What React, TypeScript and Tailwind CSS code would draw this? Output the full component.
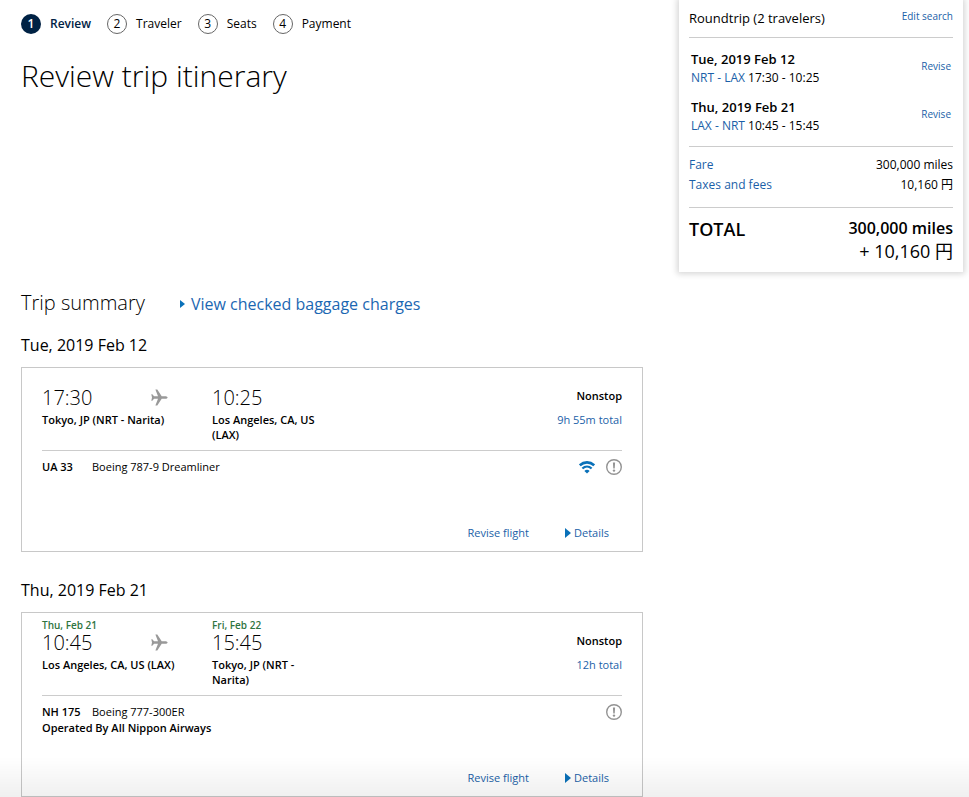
type Stop = { date?: string; time: string; place: string };

type Flight = {
  day: string;
  depart: Stop;
  arrive: Stop;
  duration: string;
  number: string;
  aircraft: string;
  operator?: string;
  wifi?: boolean;
};

const flights: Flight[] = [
  {
    day: 'Tue, 2019 Feb 12',
    depart: { time: '17:30', place: 'Tokyo, JP (NRT - Narita)' },
    arrive: { time: '10:25', place: 'Los Angeles, CA, US (LAX)' },
    duration: '9h 55m total',
    number: 'UA 33',
    aircraft: 'Boeing 787-9 Dreamliner',
    wifi: true,
  },
  {
    day: 'Thu, 2019 Feb 21',
    depart: { date: 'Thu, Feb 21', time: '10:45', place: 'Los Angeles, CA, US (LAX)' },
    arrive: { date: 'Fri, Feb 22', time: '15:45', place: 'Tokyo, JP (NRT - Narita)' },
    duration: '12h total',
    number: 'NH 175',
    aircraft: 'Boeing 777-300ER',
    operator: 'Operated By All Nippon Airways',
  },
];

const steps = ['Review', 'Traveler', 'Seats', 'Payment'];

const legs = [
  { day: 'Tue, 2019 Feb 12', route: 'NRT - LAX', times: '17:30 - 10:25' },
  { day: 'Thu, 2019 Feb 21', route: 'LAX - NRT', times: '10:45 - 15:45' },
];

function PlaneIcon() {
  return (
    <svg width="17" height="17" viewBox="0 0 17 17" fill="#999" aria-hidden="true">
      <path d="M4.4 0.4h1.900l4.400 6.800h3.400c1.400 0 2.500.6 2.500 1.300s-1.100 1.300-2.500 1.300h-3.400l-4.400 6.800H4.400l2.600-6.800H3.100L1.300 11.700H.3L1 8.500.3 5.300h1l1.800 1.900H7z" />
    </svg>
  );
}

function WifiIcon() {
  return (
    <svg width="16" height="13" viewBox="0 0 16 13" fill="none" role="img" aria-label="Wi-Fi">
      <path d="M.8 4.300C5 .4 11 .4 15.200 4.300" stroke="#0a71b9" strokeWidth="2.600" />
      <path d="M3.400 7.500c2.700-2.500 6.500-2.500 9.200 0" stroke="#0a71b9" strokeWidth="2.300" />
      <path d="M5.400 9.900c1.500-1.600 3.700-1.600 5.200 0L8 12.400z" fill="#0a71b9" />
    </svg>
  );
}

function AlertIcon() {
  return (
    <svg width="16" height="16" viewBox="0 0 16 16" fill="none" role="img" aria-label="Notice">
      <circle cx="8" cy="8" r="7.300" stroke="#939393" strokeWidth="1.400" />
      <path d="M6.900 3.500h2.200l-.4 6h-1.400z" fill="#939393" />
      <circle cx="8" cy="11.600" r="1.200" fill="#939393" />
    </svg>
  );
}

function Caret({ small = false }: { small?: boolean }) {
  return (
    <svg className={small ? 'h-2 w-[5px]' : 'h-2.5 w-[6px]'} viewBox="0 0 6 10" preserveAspectRatio="none" fill="#0a71b9" aria-hidden="true">
      <path d="M0 0l6 5-6 5z" />
    </svg>
  );
}

function StopInfo({ stop }: { stop: Stop }) {
  return (
    <div>
      <p className="h-[11px] text-[10px] leading-[11px] font-semibold text-[#2e7440]">{stop.date}</p>
      <p className="text-xl leading-6 font-light">{stop.time}</p>
      <p className="mt-0.5 text-[11px] leading-[15px] font-semibold">{stop.place}</p>
    </div>
  );
}

function FlightCard({ flight }: { flight: Flight }) {
  return (
    <section className="mb-[26px]">
      <h3 className="text-base leading-6">{flight.day}</h3>
      <div className="mt-2.5 border border-[#c8c8c8] px-5 pt-[7px] pb-2">
        <div className="grid grid-cols-[170px_minmax(0,108px)_1fr] border-b border-[#ccc] pb-2">
          <div className="relative">
            <StopInfo stop={flight.depart} />
            <div className="absolute top-3.5 left-[109px]">
              <PlaneIcon />
            </div>
          </div>
          <StopInfo stop={flight.arrive} />
          <div className="pt-[9px] text-right text-[11px] leading-6">
            <p className="font-semibold">Nonstop</p>
            <a href="#duration" className="text-[#1b5fa8]">{flight.duration}</a>
          </div>
        </div>
        <div className="flex h-[72px] justify-between pt-2">
          <div className="text-[11px] leading-4">
            <p className="flex">
              <span className="w-[50px] font-semibold">{flight.number}</span>
              <span>{flight.aircraft}</span>
            </p>
            {flight.operator && <p className="font-semibold">{flight.operator}</p>}
          </div>
          <div className="flex h-4 items-center gap-[11px]">
            {flight.wifi && <WifiIcon />}
            <AlertIcon />
          </div>
        </div>
        <div className="flex justify-end gap-9 pr-[13px] text-[11px] leading-5 text-[#1b5fa8]">
          <button type="button">Revise flight</button>
          <button type="button" className="flex items-center gap-[3px]">
            <Caret />
            Details
          </button>
        </div>
      </div>
    </section>
  );
}

function FareSummary() {
  return (
    <aside className="self-start bg-white px-2.5 pt-2 pb-2 shadow-[0_0_6px_2px_rgba(0,0,0,0.16)]">
      <div className="flex justify-between border-b border-[#ccc] pb-[9px]">
        <h2 className="text-[13px] leading-5">Roundtrip (2 travelers)</h2>
        <a href="#edit" className="text-[10px] leading-4 text-[#1b5fa8]">Edit search</a>
      </div>
      <ul className="flex flex-col gap-2.5 border-b border-[#ccc] px-0.5 pt-3 pb-2.5">
        {legs.map((leg) => (
          <li key={leg.day} className="flex items-start justify-between">
            <div>
              <p className="text-[13px] leading-[18px] font-semibold">{leg.day}</p>
              <p className="text-xs leading-5">
                <a href="#route" className="text-[#1b5fa8]">{leg.route}</a> {leg.times}
              </p>
            </div>
            <a href="#revise" className="pt-2 text-[10px] leading-4 text-[#1b5fa8]">Revise</a>
          </li>
        ))}
      </ul>
      <dl className="grid grid-cols-[1fr_auto] border-b border-[#ccc] pt-2 pb-3 text-xs leading-5">
        <dt><a href="#fare" className="text-[#1b5fa8]">Fare</a></dt>
        <dd className="text-right">300,000 miles</dd>
        <dt><a href="#taxes" className="text-[#1b5fa8]">Taxes and fees</a></dt>
        <dd className="text-right">10,160 円</dd>
      </dl>
      <div className="flex justify-between pt-2 pb-0.5 text-right">
        <p className="text-lg leading-[26px] font-semibold">TOTAL</p>
        <div>
          <p className="text-base leading-6 font-semibold">300,000 miles</p>
          <p className="text-lg leading-[22px]">+ 10,160 円</p>
        </div>
      </div>
    </aside>
  );
}

export default function App() {
  return (
    <div className="grid grid-cols-[minmax(0,1fr)_284px] gap-9 bg-white pr-1.5 pl-[21px] font-['Open_Sans','Noto_Sans_CJK_JP',sans-serif] text-black">
      <main className="pt-3.5">
        <ol className="flex gap-4 text-xs leading-5">
          {steps.map((step, i) => (
            <li key={step} className={i === 0 ? 'flex gap-[9px] font-semibold text-[#002244]' : 'flex gap-[9px]'}>
              <span
                className={
                  i === 0
                    ? 'flex size-5 items-center justify-center rounded-full bg-[#002244] text-white'
                    : 'flex size-5 items-center justify-center rounded-full border border-[#666]'
                }
              >
                {i + 1}
              </span>
              {step}
            </li>
          ))}
        </ol>
        <h1 className="mt-6 text-[30px] leading-9 font-light">Review trip itinerary</h1>
        <div className="mt-[195px] flex items-end gap-[35px]">
          <h2 className="text-xl leading-7 font-light">Trip summary</h2>
          <a href="#baggage" className="flex items-center gap-[6px] text-base leading-[26px] text-[#1b67b2]">
            <Caret small />
            View checked baggage charges
          </a>
        </div>
        <div className="mt-4">
          {flights.map((flight) => (
            <FlightCard key={flight.day} flight={flight} />
          ))}
        </div>
      </main>
      <FareSummary />
      <div className="pointer-events-none fixed inset-x-0 bottom-0 h-10 bg-linear-to-t from-black/6 to-transparent" />
    </div>
  );
}
